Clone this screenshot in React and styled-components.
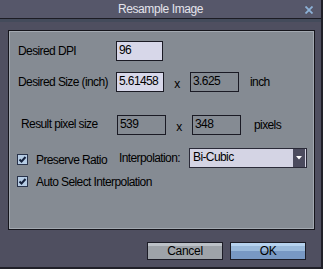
import styled, { createGlobalStyle } from "styled-components";

const GlobalStyle = createGlobalStyle`
    html, body {
        margin: 0;
        padding: 0;
        background: #24242c;
    }
    body {
        font-family: "Liberation Sans", Arial, sans-serif;
        font-size: 12px;
    }
`;

const Window = styled.div`
    width: 321px;
    height: 267px;
    background: #4f4f60;
    border-right: 2px solid #202028;
    border-bottom: 2px solid #202028;
    display: flex;
    flex-direction: column;
`;

const TitleBar = styled.div`
    height: 18px;
    flex: none;
    background: #56576a;
    border-bottom: 1px solid #1c1c24;
    box-shadow: 0 3px 0 #444b5b;
    position: relative;
    display: flex;
    align-items: center;
    justify-content: center;
    color: #e4e4ec;
    font-size: 12px;
    letter-spacing: -0.4px;
`;

const CloseButton = styled.svg`
    position: absolute;
    right: 8px;
    top: 6px;
`;

const Body = styled.div`
    flex: 1;
    display: flex;
    flex-direction: column;
    padding: 11px 6px 0 8px;
`;

const Panel = styled.div`
    height: 200px;
    box-sizing: border-box;
    flex: none;
    background: #858b93;
    border: 1px solid #15151c;
    box-shadow: inset 1px 1px 0 #a3a9b1, inset -1px -1px 0 #a3a9b1;
    padding: 10px 0 0 0;
    display: flex;
    flex-direction: column;
    color: #000;
    letter-spacing: -0.6px;
`;

const Row = styled.div`
    display: flex;
    align-items: center;
    height: 20px;
    margin-top: ${(p) => p.$top || 0}px;
    padding-left: ${(p) => p.$left || 9}px;
`;

const Label = styled.div`
    width: ${(p) => p.$width || 98}px;
    flex: none;
    line-height: 20px;
    margin-top: ${(p) => p.$shift || 0}px;
    white-space: nowrap;
`;

const Field = styled.div`
    width: ${(p) => p.$width}px;
    height: 20px;
    box-sizing: border-box;
    flex: none;
    border: 1px solid #1a1a24;
    background: ${(p) => (p.$edit ? "#d7d7e9" : "transparent")};
    padding: 0 2px;
    line-height: 17px;
`;

const Times = styled.div`
    width: ${(p) => p.$width || 26}px;
    flex: none;
    text-align: center;
    padding-top: 3px;
`;

const Unit = styled.div`
    margin-left: ${(p) => p.$gap}px;
`;

const CheckWrap = styled.div`
    display: flex;
    align-items: center;
    width: ${(p) => p.$width || "auto"};
    flex: none;
    margin-top: 3px;
    white-space: nowrap;
`;

const Box = styled.div`
    width: 11px;
    height: 11px;
    box-sizing: border-box;
    border: 1px solid #28324a;
    background: #b6cce4;
    margin-right: 8px;
    display: flex;
    align-items: center;
    justify-content: center;
`;

const Select = styled.div`
    width: 118px;
    height: 20px;
    box-sizing: border-box;
    border: 1px solid #2a2a38;
    background: #d4d4e4;
    display: flex;
    align-items: stretch;
    padding: 0 1px 0 3px;
`;

const SelectText = styled.div`
    flex: 1;
    line-height: 17px;
`;

const SelectArrow = styled.div`
    width: 12px;
    background: #4b4b5e;
    display: flex;
    align-items: center;
    justify-content: center;
`;

const Buttons = styled.div`
    display: flex;
    justify-content: flex-end;
    gap: 7px;
    margin-top: 12px;
    padding-right: 9px;
`;

const Button = styled.div`
    width: 76px;
    height: 18px;
    box-sizing: border-box;
    border: 1px solid #1c1c26;
    background: ${(p) =>
        p.$primary
            ? "linear-gradient(#b6d2ee 0 3px, #9ab9da 3px 8px, #7898c3 8px)"
            : "linear-gradient(#bcc1c7 0 3px, #9ea3a9 3px)"};
    text-align: center;
    line-height: 16px;
    color: #000;
    letter-spacing: -0.3px;
`;

const Check = () => (
    <svg width="9" height="9" viewBox="0 0 9 9">
        <path d="M1.5 4.5 L3.5 6.5 L7.5 2" stroke="#14203a" strokeWidth="2" fill="none" />
    </svg>
);

const App = () => {
    return (
        <Window>
            <GlobalStyle />
            <TitleBar>
                Resample Image
                <CloseButton width="8" height="8" viewBox="0 0 8 8">
                    <path d="M0.5 0.5 L7.5 7.5 M7.5 0.5 L0.5 7.5" stroke="#8db2d8" strokeWidth="1.8" />
                </CloseButton>
            </TitleBar>
            <Body>
                <Panel>
                    <Row>
                        <Label>Desired DPI</Label>
                        <Field $edit $width={47}>96</Field>
                    </Row>
                    <Row $top={11}>
                        <Label>Desired Size (inch)</Label>
                        <Field $edit $width={48}>5.61458</Field>
                        <Times>x</Times>
                        <Field $width={49}>3.625</Field>
                        <Unit $gap={11}>inch</Unit>
                    </Row>
                    <Row $top={23} $left={12}>
                        <Label $width={96} $shift={-3}>Result pixel size</Label>
                        <Field $width={49}>539</Field>
                        <Times>x</Times>
                        <Field $width={49}>348</Field>
                        <Unit $gap={13}>pixels</Unit>
                    </Row>
                    <Row $top={13} $left={8}>
                        <CheckWrap $width="102px">
                            <Box><Check /></Box>
                            Preserve Ratio
                        </CheckWrap>
                        <Label $width={70}>Interpolation:</Label>
                        <Select>
                            <SelectText>Bi-Cubic</SelectText>
                            <SelectArrow>
                                <svg width="6" height="4" viewBox="0 0 6 4">
                                    <polygon points="0,0 6,0 3,3.5" fill="#ffffff" />
                                </svg>
                            </SelectArrow>
                        </Select>
                    </Row>
                    <Row $top={2} $left={8}>
                        <CheckWrap>
                            <Box><Check /></Box>
                            Auto Select Interpolation
                        </CheckWrap>
                    </Row>
                </Panel>
                <Buttons>
                    <Button>Cancel</Button>
                    <Button $primary>OK</Button>
                </Buttons>
            </Body>
        </Window>
    );
};

export default App;
